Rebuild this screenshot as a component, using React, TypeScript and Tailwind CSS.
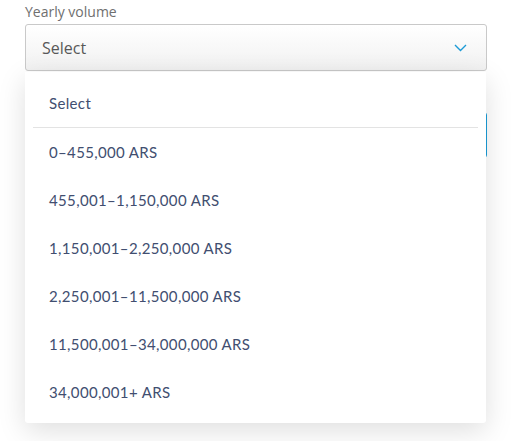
const options = [
  '0–455,000 ARS',
  '455,001–1,150,000 ARS',
  '1,150,001–2,250,000 ARS',
  '2,250,001–11,500,000 ARS',
  '11,500,001–34,000,000 ARS',
  '34,000,001+ ARS',
];

export default function App() {
  return (
    <div className="min-h-[441px] w-[515px] bg-white">
      <div className="relative ml-[25px] w-[462px] pt-[3px]">
        <label className="block h-[21px] font-['Open_Sans',sans-serif] text-[14px] leading-[18px] text-[#6f6f6f]">
          Yearly volume
        </label>

        {/* select trigger */}
        <div className="flex h-[47px] items-center justify-between rounded-[3px] border border-[#c9c9c9] bg-gradient-to-b from-white to-[#f1f1f1] pl-[16px] pr-[19px]">
          <span className="font-['Open_Sans',sans-serif] text-[16px] text-[#585858]">Select</span>
          <svg width="13" height="8" viewBox="0 0 13 8" fill="none">
            <path d="M1 1l5.5 5.5L12 1" stroke="#1b9ad6" strokeWidth="1.4" />
          </svg>
        </div>

        {/* next field, mostly hidden under the menu */}
        <div className="mt-[41px] h-[46px] rounded-[3px] border border-[#1a9dd9] bg-white" />
        <div className="h-[280px]" />

        {/* open menu */}
        <div className="absolute left-0 top-[72px] w-[461px] rounded-b-[3px] bg-white pt-[7px] pb-[7px] font-['Lato',sans-serif] text-[15px] tracking-[0.35px] text-[#414e70] shadow-[0_8px_28px_rgba(0,0,0,0.13)]">
          <div className="flex h-[48px] items-center pl-[24px]">Select</div>
          <div className="mx-[8px] h-px bg-[#e3e3e3]" />
          {options.map((o) => (
            <div key={o} className="flex h-[48px] items-center pl-[24px]">
              {o}
            </div>
          ))}
        </div>
      </div>
    </div>
  );
}
